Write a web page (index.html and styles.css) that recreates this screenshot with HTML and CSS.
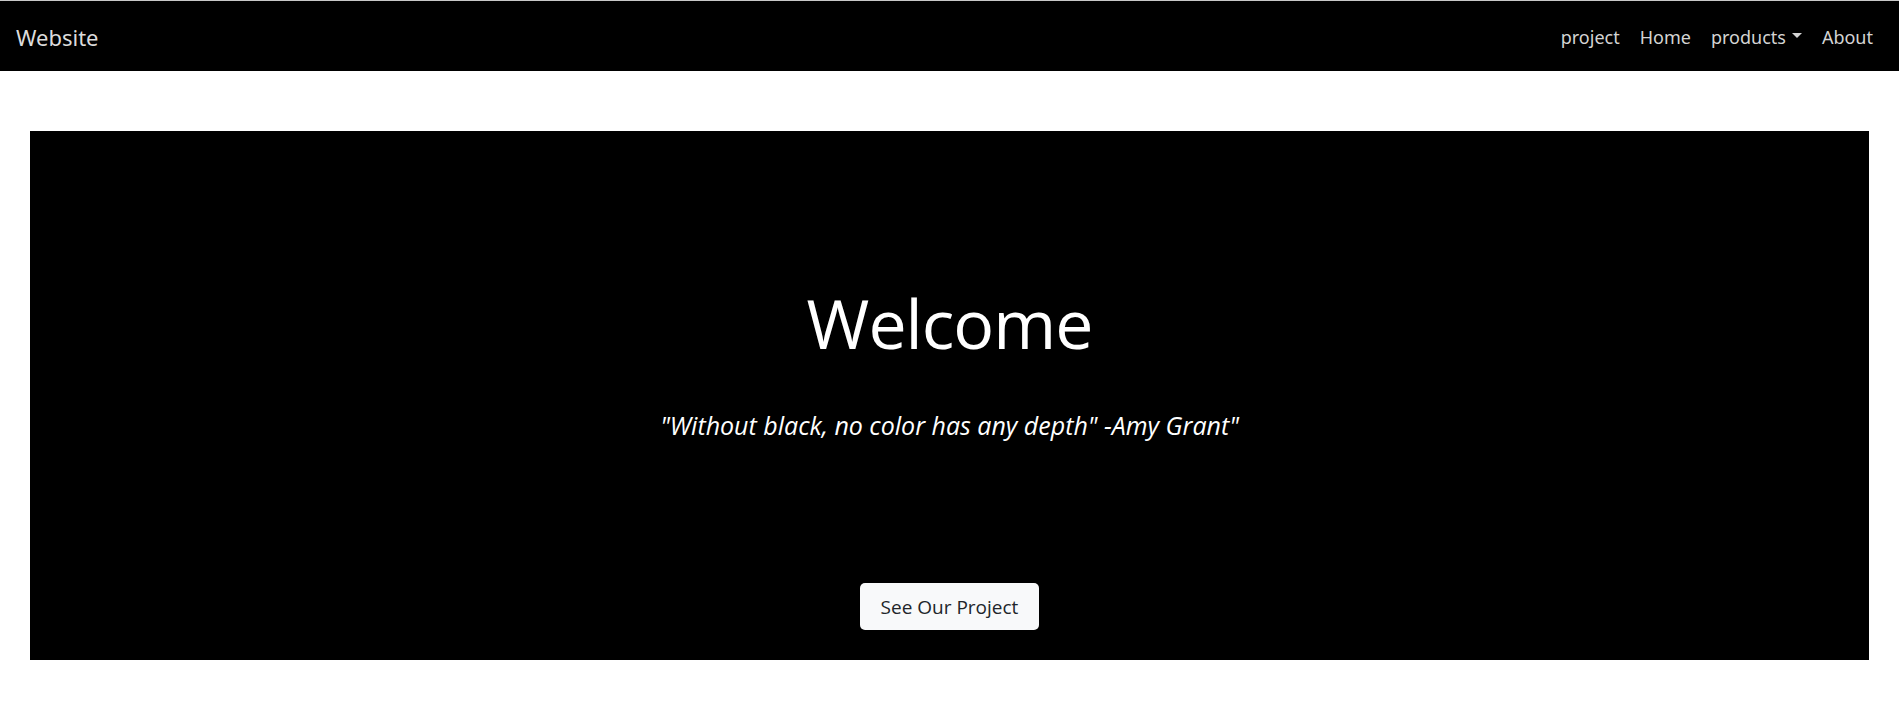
FILE: index.html
```html
<!DOCTYPE html>
<html lang="en">
<head>
<meta charset="utf-8">
<title>Website</title>
<link rel="stylesheet" href="styles.css">
</head>
<body>
<nav class="navbar">
  <a class="brand" href="#">Website</a>
  <ul class="nav-links">
    <li><a href="#">project</a></li>
    <li><a href="#">Home</a></li>
    <li><a href="#" class="dropdown">products<span class="caret"></span></a></li>
    <li><a href="#">About</a></li>
  </ul>
</nav>
<main class="page">
  <section class="hero">
    <h1 class="hero-title">Welcome</h1>
    <p class="hero-quote">"Without black, no color has any depth" -Amy Grant"</p>
    <a class="hero-btn" href="#">See Our Project</a>
  </section>
</main>
</body>
</html>
```
FILE: styles.css
```css
* { box-sizing: border-box; }
html, body { margin: 0; padding: 0; background: #fff; }
body { font-family: "Open Sans", "Noto Sans", sans-serif; }
a { text-decoration: none; }

.navbar {
  height: 71px;
  border-top: 1px solid #c8c8c8;
  background: #000;
  display: flex;
  align-items: center;
  justify-content: space-between;
  padding: 0 16px;
}
.brand {
  color: #dcdcdc;
  font-family: "Noto Sans", sans-serif;
  font-size: 22px;
  line-height: 1;
  padding-top: 2px;
}
.nav-links {
  list-style: none;
  margin: 0;
  padding: 0;
  display: flex;
  gap: 20px;
  padding-right: 10px;
}
.nav-links a {
  color: #d4d4d4;
  font-family: "Noto Sans", sans-serif;
  font-size: 18px;
  display: flex;
  align-items: center;
  padding-top: 2px;
}
.caret {
  display: inline-block;
  margin-left: 6px;
  width: 0;
  height: 0;
  border-left: 5px solid transparent;
  border-right: 5px solid transparent;
  border-top: 5px solid #d4d4d4;
  margin-top: -4px;
}

.page { padding: 60px 30px 0; }
.hero {
  background: #000;
  height: 529px;
  display: flex;
  flex-direction: column;
  align-items: center;
  color: #fff;
  padding-top: 158px;
}
.hero-title {
  margin: 0;
  font-family: "Open Sans", sans-serif;
  font-weight: 400;
  font-size: 68px;
  line-height: 1;
  letter-spacing: -1px;
}
.hero-quote {
  margin: 53px 0 0;
  font-family: "Open Sans", sans-serif;
  font-style: italic;
  font-size: 25px;
  line-height: 1.2;
}
.hero-btn {
  margin-top: 143px;
  background: #f8f9fa;
  color: #212529;
  font-family: "Open Sans", sans-serif;
  font-size: 19px;
  height: 47px;
  width: 179px;
  display: flex;
  align-items: center;
  justify-content: center;
  border-radius: 5px;
}
```
